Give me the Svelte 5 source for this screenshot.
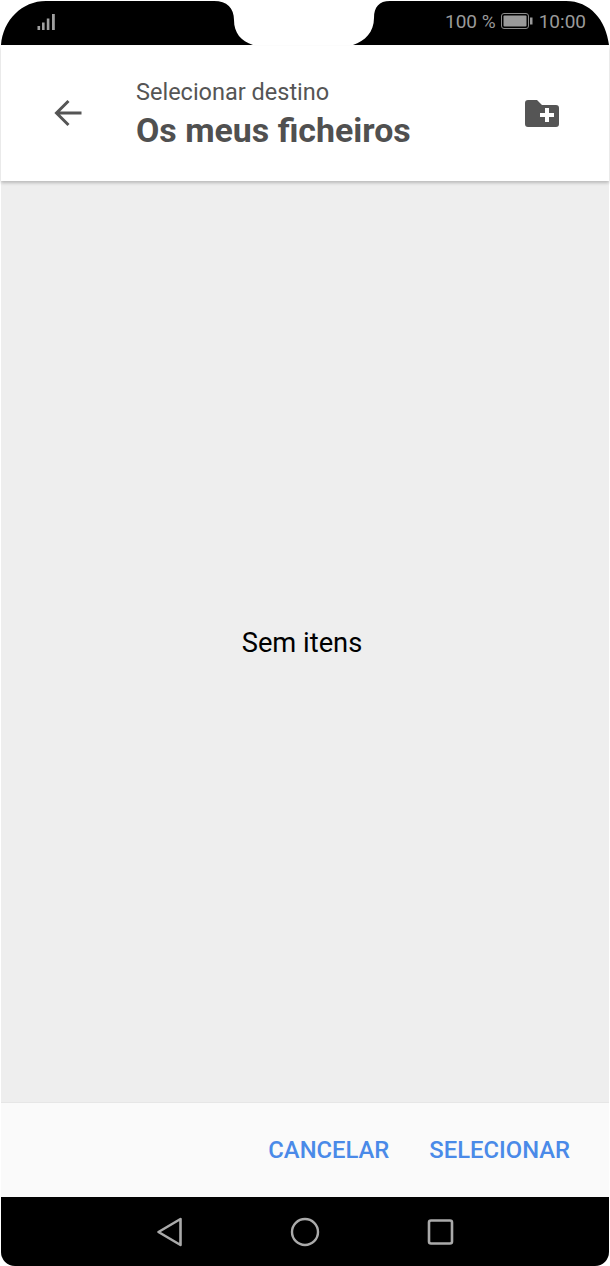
<script>
  let title = "Os meus ficheiros";
  let subtitle = "Selecionar destino";
</script>

<div class="phone">
  <!-- barra de estado com o recorte da câmara -->
  <div class="status">
    <svg class="notch" width="610" height="46" viewBox="0 0 610 46">
      <path d="M1 45C3 20 22 1 46 1H214C227 1 234 8 234 20C234 33 241 41 253 45H1Z" fill="#000" />
      <path d="M353 45C365 41 374 32 374 18C374 7 379 1 390 1H566C590 1 606 20 609 45H353Z" fill="#000" />
    </svg>
    <svg class="signal" width="20" height="18" viewBox="0 0 20 18">
      <rect x="0.500" y="13" width="2.600" height="4" fill="#a0a0a0" />
      <rect x="5" y="9.500" width="2.600" height="7.500" fill="#a0a0a0" />
      <rect x="9.800" y="5.500" width="2.600" height="11.500" fill="#a0a0a0" />
      <rect x="15" y="1" width="2.800" height="16" fill="#a0a0a0" />
    </svg>
    <div class="status-right">
      <span>100 %</span>
      <svg class="battery" width="33" height="16" viewBox="0 0 33 16">
        <rect x="0.500" y="0.500" width="27" height="15" rx="2.500" fill="none" stroke="#8a8a8a" stroke-width="1" />
        <rect x="2.500" y="2.500" width="23" height="11" rx="1" fill="#9a9a9a" />
        <rect x="29" y="4.500" width="2.500" height="7" fill="#9a9a9a" />
      </svg>
      <span>10:00</span>
    </div>
  </div>

  <header>
    <button class="back" aria-label="Voltar">
      <svg width="30" height="30" viewBox="0 0 30 30">
        <path d="M28.500 15H4M15.500 3 3.500 15 15.500 27" fill="none" stroke="#555" stroke-width="3" />
      </svg>
    </button>
    <div class="titles">
      <div class="subtitle">{subtitle}</div>
      <h1>{title}</h1>
    </div>
    <button class="add" aria-label="Nova pasta">
      <svg width="36" height="30" viewBox="0 0 36 30">
        <path d="M4 1H13L18 6H32C34 6 35 7 35 9V25C35 27 34 28 32 28H4C2 28 1 27 1 25V4C1 2 2 1 4 1Z" fill="#555" />
        <path d="M21 9H25V14H30V18H25V23H21V18H16V14H21Z" fill="#fff" />
      </svg>
    </button>
  </header>

  <main>
    <p>Sem itens</p>
  </main>

  <footer>
    <button class="action">CANCELAR</button>
    <button class="action">SELECIONAR</button>
  </footer>

  <!-- botões de navegação -->
  <nav>
    <svg width="28" height="32" viewBox="0 0 28 32">
      <path d="M24.500 3V29L2.500 16Z" fill="none" stroke="#aaa" stroke-width="2.600" stroke-linejoin="round" />
    </svg>
    <svg width="30" height="30" viewBox="0 0 30 30">
      <circle cx="15" cy="15" r="13" fill="none" stroke="#aaa" stroke-width="2.400" />
    </svg>
    <svg width="28" height="28" viewBox="0 0 28 28">
      <rect x="3" y="2.500" width="23" height="23" rx="2" fill="none" stroke="#aaa" stroke-width="2.600" />
    </svg>
  </nav>
</div>

<style>
  :global(body) {
    margin: 0;
    background: #fff;
  }

  .phone {
    width: 610px;
    height: 1266px;
    display: flex;
    flex-direction: column;
    font-family: Roboto, "Liberation Sans", sans-serif;
    overflow: hidden;
  }

  .status {
    position: relative;
    height: 46px;
    flex: none;
    display: flex;
    justify-content: space-between;
    align-items: center;
    padding: 0 24px 0 37px;
    box-sizing: border-box;
    color: #9a9a9a;
    font-size: 19px;
  }

  .notch {
    position: absolute;
    left: 0;
    top: 0;
  }

  .signal,
  .status-right {
    position: relative;
  }

  .signal {
    margin-bottom: 2px;
  }

  .status-right {
    display: flex;
    align-items: center;
    gap: 5px;
    margin-bottom: 4px;
  }

  header {
    height: 135px;
    flex: none;
    margin: 0 1px;
    display: flex;
    align-items: center;
    background: #fff;
    box-shadow: 0 2px 3px rgba(0, 0, 0, 0.22);
    position: relative;
    z-index: 1;
  }

  button {
    border: 0;
    background: none;
    padding: 0;
    font: inherit;
  }

  .back {
    width: 30px;
    height: 30px;
    margin-left: 52px;
    margin-bottom: 1px;
  }

  .titles {
    margin-left: 53px;
    flex: 1;
  }

  .subtitle {
    font-size: 23.500px;
    line-height: 30px;
    color: #555;
  }

  h1 {
    margin: 4px 0 0;
    font-size: 33.900px;
    line-height: 40px;
    font-weight: 700;
    color: #505050;
  }

  .add {
    width: 36px;
    height: 30px;
    margin-right: 49px;
    margin-top: 1px;
  }

  main {
    flex: 1;
    margin: 0 1px;
    background: #eee;
    display: flex;
    align-items: center;
    justify-content: center;
  }

  main p {
    margin: 2px 6px 0 0;
    font-size: 27.300px;
    color: #000;
  }

  footer {
    height: 95px;
    flex: none;
    box-sizing: border-box;
    margin: 0 1px;
    background: #fafafa;
    border-top: 1px solid #e6e6e6;
    display: flex;
    justify-content: flex-end;
    align-items: center;
    gap: 40px;
    padding: 0 39px 0 0;
  }

  .action {
    font-size: 23.800px;
    font-weight: 500;
    color: #4a8ae8;
  }

  nav {
    height: 69px;
    flex: none;
    margin: 0 1px;
    background: #000;
    border-radius: 0 0 14px 14px;
    display: flex;
    align-items: center;
    justify-content: center;
    gap: 106px;
  }
</style>
